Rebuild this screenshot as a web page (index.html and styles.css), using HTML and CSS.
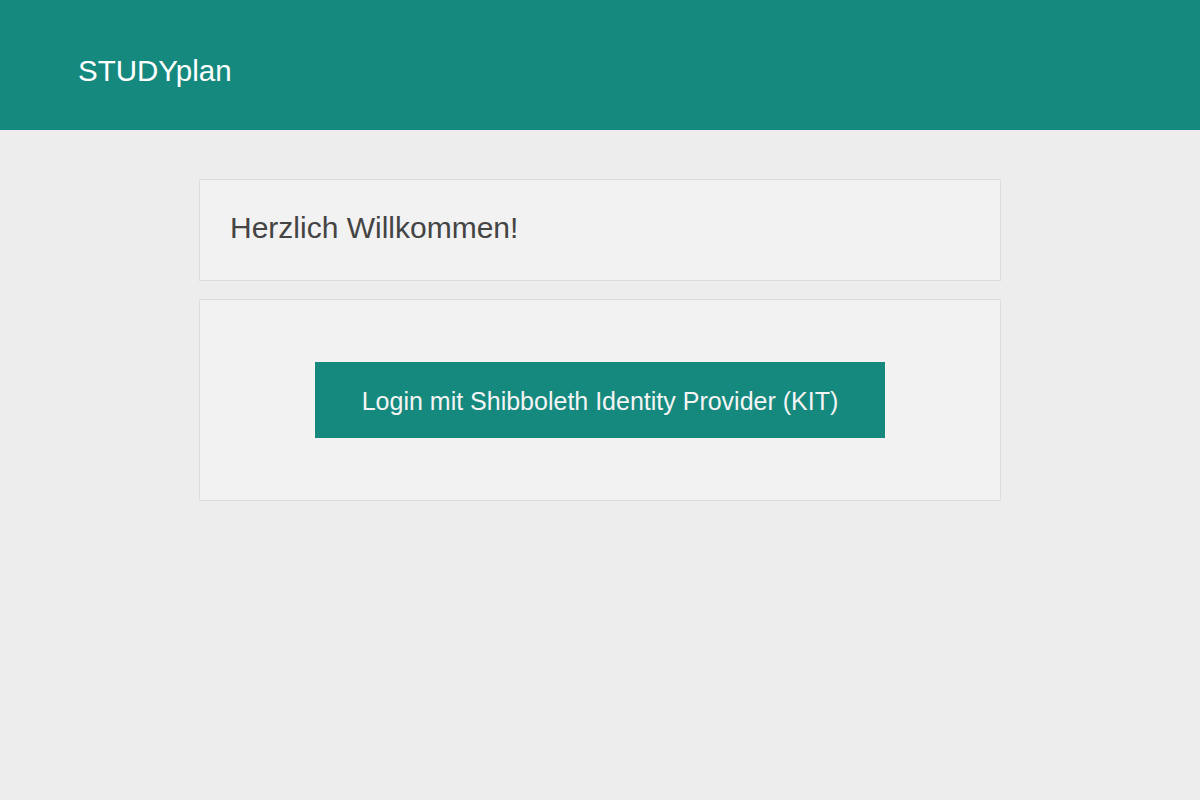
FILE: index.html
```html
<!DOCTYPE html>
<html lang="de">
<head>
<meta charset="utf-8">
<title>STUDYplan</title>
<link rel="stylesheet" href="styles.css">
</head>
<body>
<header class="topbar">
  <div class="brand">STUDYplan</div>
</header>
<main class="container">
  <section class="card card-welcome">
    <h1 class="welcome">Herzlich Willkommen!</h1>
  </section>
  <section class="card card-login">
    <a class="login-btn" href="#">Login mit Shibboleth Identity Provider (KIT)</a>
  </section>
</main>
</body>
</html>
```

FILE: styles.css
```css
html, body {
  margin: 0;
  padding: 0;
}
body {
  background: #eeeded;
  font-family: "Liberation Sans", Arial, sans-serif;
  min-height: 800px;
}
.topbar {
  box-sizing: border-box;
  height: 130px;
  background: #15897e;
  display: flex;
  align-items: center;
  padding: 12px 0 0 78px;
}
.brand {
  color: #ffffff;
  font-size: 29.5px;
  line-height: 1;
}
.container {
  width: 802px;
  margin: 49px auto 0;
  display: flex;
  flex-direction: column;
  gap: 18px;
}
.card {
  box-sizing: border-box;
  background: #f2f2f2;
  border: 1px solid #dcdcdc;
}
.card-welcome {
  height: 102px;
  display: flex;
  align-items: center;
  padding: 0 30px;
}
.welcome {
  margin: 0;
  font-weight: normal;
  font-size: 30px;
  line-height: 1;
  color: #444444;
  transform: translateY(-2px);
}
.card-login {
  height: 202px;
  display: flex;
  justify-content: center;
  align-items: center;
}
.login-btn {
  box-sizing: border-box;
  width: 570px;
  height: 76px;
  padding-top: 4px;
  background: #15897e;
  color: #f4f4f4;
  text-decoration: none;
  font-size: 25px;
  display: flex;
  align-items: center;
  justify-content: center;
  margin-top: -1px;
}
```
